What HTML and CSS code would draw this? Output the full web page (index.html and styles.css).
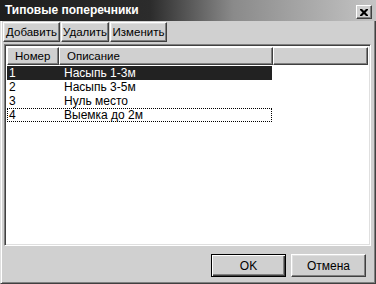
FILE: index.html
```html
<!DOCTYPE html>
<html>
<head>
    <meta charset="utf-8">
    <title>Типовые поперечники</title>
    <link rel="stylesheet" href="styles.css">
</head>
<body>
    <div class="window">
        <div class="titlebar">
            <span class="title">Типовые поперечники</span>
            <button class="close-btn">
                <svg width="8" height="7" viewBox="0 0 8 7">
                    <path d="M0 0h2l2 2 2-2h2v1l-2.5 2.5 2.5 2.5v1h-2l-2-2-2 2h-2v-1l2.5-2.5-2.5-2.5z" fill="#000"/>
                </svg>
            </button>
        </div>

        <div class="toolbar">
            <button class="btn tool tool-add">Добавить</button>
            <button class="btn tool tool-del">Удалить</button>
            <button class="btn tool tool-edit">Изменить</button>
        </div>

        <div class="list">
            <div class="list-header">
                <div class="col col-num">Номер</div>
                <div class="col col-desc">Описание</div>
                <div class="col col-rest"></div>
            </div>
            <div class="rows">
                <div class="row selected"><span class="cell-num">1</span><span class="cell-desc">Насыпь 1-3м</span></div>
                <div class="row"><span class="cell-num">2</span><span class="cell-desc">Насыпь 3-5м</span></div>
                <div class="row"><span class="cell-num">3</span><span class="cell-desc">Нуль место</span></div>
                <div class="row focused"><span class="cell-num">4</span><span class="cell-desc">Выемка до 2м</span></div>
            </div>
        </div>

        <div class="footer">
            <button class="btn dialog default">OK</button>
            <button class="btn dialog">Отмена</button>
        </div>
    </div>
</body>
</html>
```

FILE: styles.css
```css
body {
    margin: 0;
    font-family: "Liberation Sans", Arial, sans-serif;
    font-size: 11px;
    color: #000;
}

.window {
    width: 376px;
    height: 284px;
    box-sizing: border-box;
    background-color: #d0d0d0;
    border-left: 1px solid #dfdfdf;
    border-right: 1px solid #404040;
    border-bottom: 1px solid #404040;
    box-shadow: inset 1px 0 #fff, inset -1px -1px #808080;
    display: flex;
    flex-direction: column;
}

.titlebar {
    height: 21px;
    margin-left: -1px;
    margin-right: -1px;
    display: flex;
    align-items: center;
    justify-content: space-between;
    background: linear-gradient(to right, #1e1e1e 0%, #2c2c2c 40%, #8a8a8a 62%, #c4c4c4 100%);
    padding: 0 4px 0 5px;
}

.title {
    color: #fff;
    font-weight: bold;
    font-size: 12px;
    margin-top: -1px;
}

.close-btn {
    width: 16px;
    height: 14px;
    padding: 0;
    margin-top: 3px;
    display: flex;
    align-items: center;
    justify-content: center;
    background-color: #d0d0d0;
    border: 1px solid;
    border-color: #fff #404040 #404040 #fff;
    box-shadow: inset -1px -1px #808080;
}

.btn {
    font-family: "Liberation Sans", Arial, sans-serif;
    font-size: 11px;
    color: #000;
    background-color: #d0d0d0;
    border: 1px solid;
    border-color: #fff #404040 #404040 #fff;
    box-shadow: inset -1px -1px #808080, inset 1px 1px #dfdfdf;
    padding: 0;
}

.toolbar {
    display: flex;
    gap: 1px;
    padding: 1px 0 0 2px;
}

.tool {
    height: 20px;
    font-size: 11.5px;
}

.tool-add {
    width: 57px;
}

.tool-del {
    width: 48px;
}

.tool-edit {
    width: 57px;
}

.list {
    margin: 2px 4px 0 3px;
    height: 202px;
    box-sizing: border-box;
    background-color: #fff;
    border: 1px solid;
    border-color: #808080 #fff #fff #808080;
    box-shadow: inset 1px 1px #404040, inset -1px -1px #dfdfdf;
    padding: 2px;
}

.list-header {
    display: flex;
    height: 18px;
}

.col {
    box-sizing: border-box;
    height: 18px;
    line-height: 16px;
    background-color: #d0d0d0;
    border: 1px solid;
    border-color: #fff #404040 #404040 #fff;
    box-shadow: inset -1px -1px #808080;
    padding-left: 7px;
    font-size: 11.5px;
}

.col-num {
    width: 52px;
}

.col-desc {
    width: 214px;
}

.col-rest {
    flex: 1;
}

.rows {
    padding-top: 1px;
}

.row {
    display: flex;
    height: 14px;
    line-height: 14px;
    width: 265px;
    box-sizing: border-box;
    font-size: 12px;
}

.row.selected {
    background-color: #222;
    color: #fff;
}

.row.focused {
    outline: 1px dotted #000;
    outline-offset: -1px;
}

.cell-num {
    width: 55px;
    padding-left: 2px;
}

.cell-desc {
    flex: 1;
}

.footer {
    display: flex;
    justify-content: flex-end;
    gap: 5px;
    padding: 8px 9px 0 0;
}

.dialog {
    width: 75px;
    height: 23px;
    font-size: 12px;
}

.dialog.default {
    border-color: #000;
    box-shadow: inset 1px 1px #fff, inset -1px -1px #404040, inset -2px -2px #808080;
}
```
